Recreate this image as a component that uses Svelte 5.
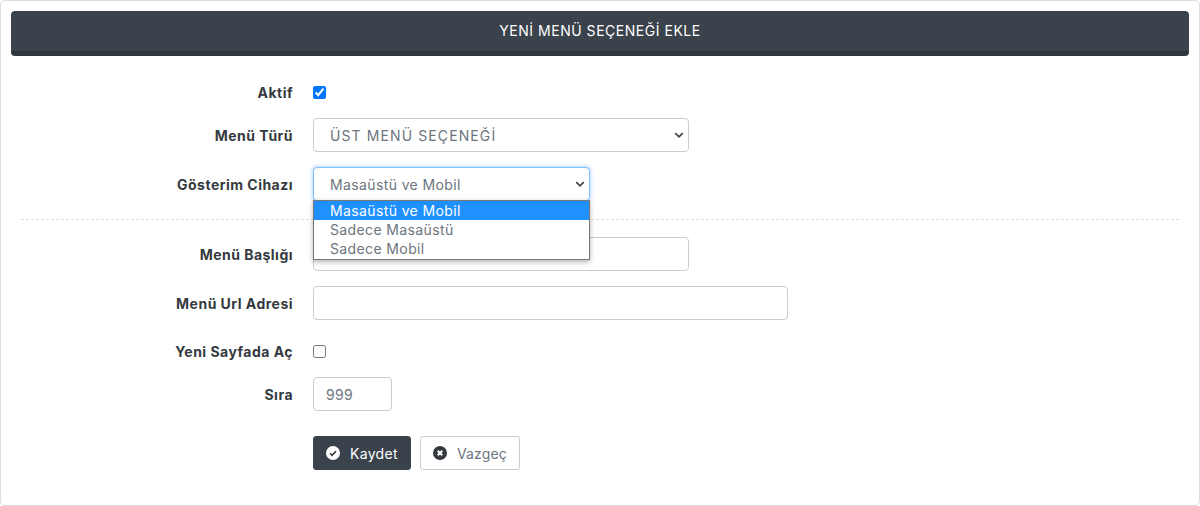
<script lang="ts">
  const deviceOptions = ['Masaüstü ve Mobil', 'Sadece Masaüstü', 'Sadece Mobil']
  let active = $state(true)
  let newPage = $state(false)
</script>

<div class="card">
  <h1 class="title">YENİ MENÜ SEÇENEĞİ EKLE</h1>

  <form class="body" onsubmit={(e) => e.preventDefault()}>
    <div class="row check-row">
      <span class="label">Aktif</span>
      <input type="checkbox" bind:checked={active} />
    </div>

    <div class="row">
      <span class="label">Menü Türü</span>
      <select class="control select w-md upper">
        <option>ÜST MENÜ SEÇENEĞİ</option>
      </select>
    </div>

    <div class="row last">
      <span class="label">Gösterim Cihazı</span>
      <div class="select-wrap">
        <select class="control select focus">
          <option>{deviceOptions[0]}</option>
        </select>
        <ul class="dropdown">
          {#each deviceOptions as option, i}
            <li class:selected={i === 0}>{option}</li>
          {/each}
        </ul>
      </div>
    </div>

    <div class="divider"></div>

    <div class="row">
      <span class="label">Menü Başlığı</span>
      <input class="control w-md" type="text" />
    </div>

    <div class="row url-row">
      <span class="label">Menü Url Adresi</span>
      <input class="control w-lg" type="text" />
    </div>

    <div class="row check-row">
      <span class="label">Yeni Sayfada Aç</span>
      <input type="checkbox" bind:checked={newPage} />
    </div>

    <div class="row order-row">
      <span class="label">Sıra</span>
      <input class="control w-sm" type="text" value="999" />
    </div>

    <div class="row actions">
      <span class="label"></span>
      <button class="btn primary" type="submit">
        <svg viewBox="0 0 16 16" width="14" height="14" aria-hidden="true">
          <circle cx="8" cy="8" r="8" fill="#fff" />
          <path d="M4.6 8.3l2.3 2.3 4.5-4.6" fill="none" stroke="#343a40" stroke-width="1.9" />
        </svg>
        Kaydet
      </button>
      <button class="btn plain" type="button">
        <svg viewBox="0 0 16 16" width="14" height="14" aria-hidden="true">
          <circle cx="8" cy="8" r="8" fill="#343a40" />
          <path d="M5.4 5.4l5.2 5.2M10.6 5.4l-5.2 5.2" fill="none" stroke="#fff" stroke-width="2.4" />
        </svg>
        Vazgeç
      </button>
    </div>
  </form>
</div>

<style>
  :global(body) {
    margin: 0;
    background: #fff;
  }

  .card {
    box-sizing: border-box;
    height: 506px;
    padding: 10px;
    border: 1px solid #ddd;
    border-radius: 5px;
    font-family: Inter, "Open Sans", sans-serif;
    font-size: 14px;
    letter-spacing: 0.38px;
    color: #343a40;
  }

  .title {
    box-sizing: border-box;
    height: 45px;
    margin: 0;
    padding-top: 10px;
    background: #3a424c;
    border-bottom: 5px solid #2e353d;
    border-radius: 4px;
    color: #fff;
    font-size: 14px;
    font-weight: 400;
    letter-spacing: 0.52px;
    line-height: 20px;
    text-align: center;
  }

  .body {
    padding: 26px 0 0;
  }

  .row {
    display: flex;
    align-items: center;
    gap: 20px;
    margin-bottom: 15px;
  }

  .check-row {
    height: 21px;
  }

  .url-row {
    margin-bottom: 21px;
  }

  .order-row {
    margin-bottom: 25px;
  }

  .last {
    margin-bottom: 18px;
  }

  .actions {
    gap: 9px;
  }

  .actions .label {
    margin-right: 11px;
  }

  .label {
    box-sizing: border-box;
    flex: none;
    width: 282px;
    font-weight: 700;
    letter-spacing: 0.48px;
    text-align: right;
  }

  input[type='checkbox'] {
    width: 13px;
    height: 13px;
    margin: 0;
  }

  .control {
    box-sizing: border-box;
    height: 34px;
    padding: 0 16px;
    background: #fff;
    border: 1px solid #ccc;
    border-radius: 4px;
    color: #6c757d;
    font: inherit;
    letter-spacing: inherit;
    outline: none;
  }

  .upper {
    letter-spacing: 1.1px;
  }

  .w-sm {
    width: 79px;
    padding: 0 12px;
  }

  .w-md {
    width: 376px;
  }

  .w-lg {
    width: 475px;
  }

  .select {
    appearance: none;
    background-image: url("data:image/svg+xml,%3csvg xmlns='http://www.w3.org/2000/svg' viewBox='0 0 16 16'%3e%3cpath fill='none' stroke='%23444' stroke-width='2.8' d='M2 5l6 6 6-6'/%3e%3c/svg%3e");
    background-repeat: no-repeat;
    background-position: right 4px center;
    background-size: 10px 10px;
  }

  .select-wrap {
    position: relative;
    width: 277px;
    height: 34px;
  }

  .focus {
    width: 100%;
    border-color: #80bdff;
    box-shadow: 0 0 5px rgba(0, 123, 255, 0.4);
  }

  .dropdown {
    position: absolute;
    z-index: 2;
    top: 33px;
    left: 0;
    box-sizing: border-box;
    width: 100%;
    height: 60px;
    margin: 0;
    padding: 0;
    list-style: none;
    background: #fff;
    border: 1px solid #767676;
    box-shadow: 0 2px 5px rgba(0, 0, 0, 0.3);
    color: #6c757d;
    font-size: 14px;
  }

  .dropdown li {
    height: 19px;
    padding: 0 16px;
    line-height: 19px;
  }

  .dropdown li.selected {
    background: #1e90ff;
    color: #fff;
  }

  .divider {
    margin: 0 10px 17px;
    border-top: 1px dashed #ddd;
  }

  .btn {
    display: inline-flex;
    align-items: center;
    box-sizing: border-box;
    height: 34px;
    gap: 10px;
    padding: 0 12px;
    border: 1px solid #ccc;
    border-radius: 3px;
    background: #fff;
    color: #6c757d;
    font: inherit;
    letter-spacing: 0.3px;
  }

  .btn svg {
    flex: none;
  }

  .primary {
    width: 98px;
    background: #3a424c;
    border-color: #3a424c;
    color: #fff;
  }

  .plain {
    width: 100px;
    letter-spacing: 0.15px;
  }
</style>
